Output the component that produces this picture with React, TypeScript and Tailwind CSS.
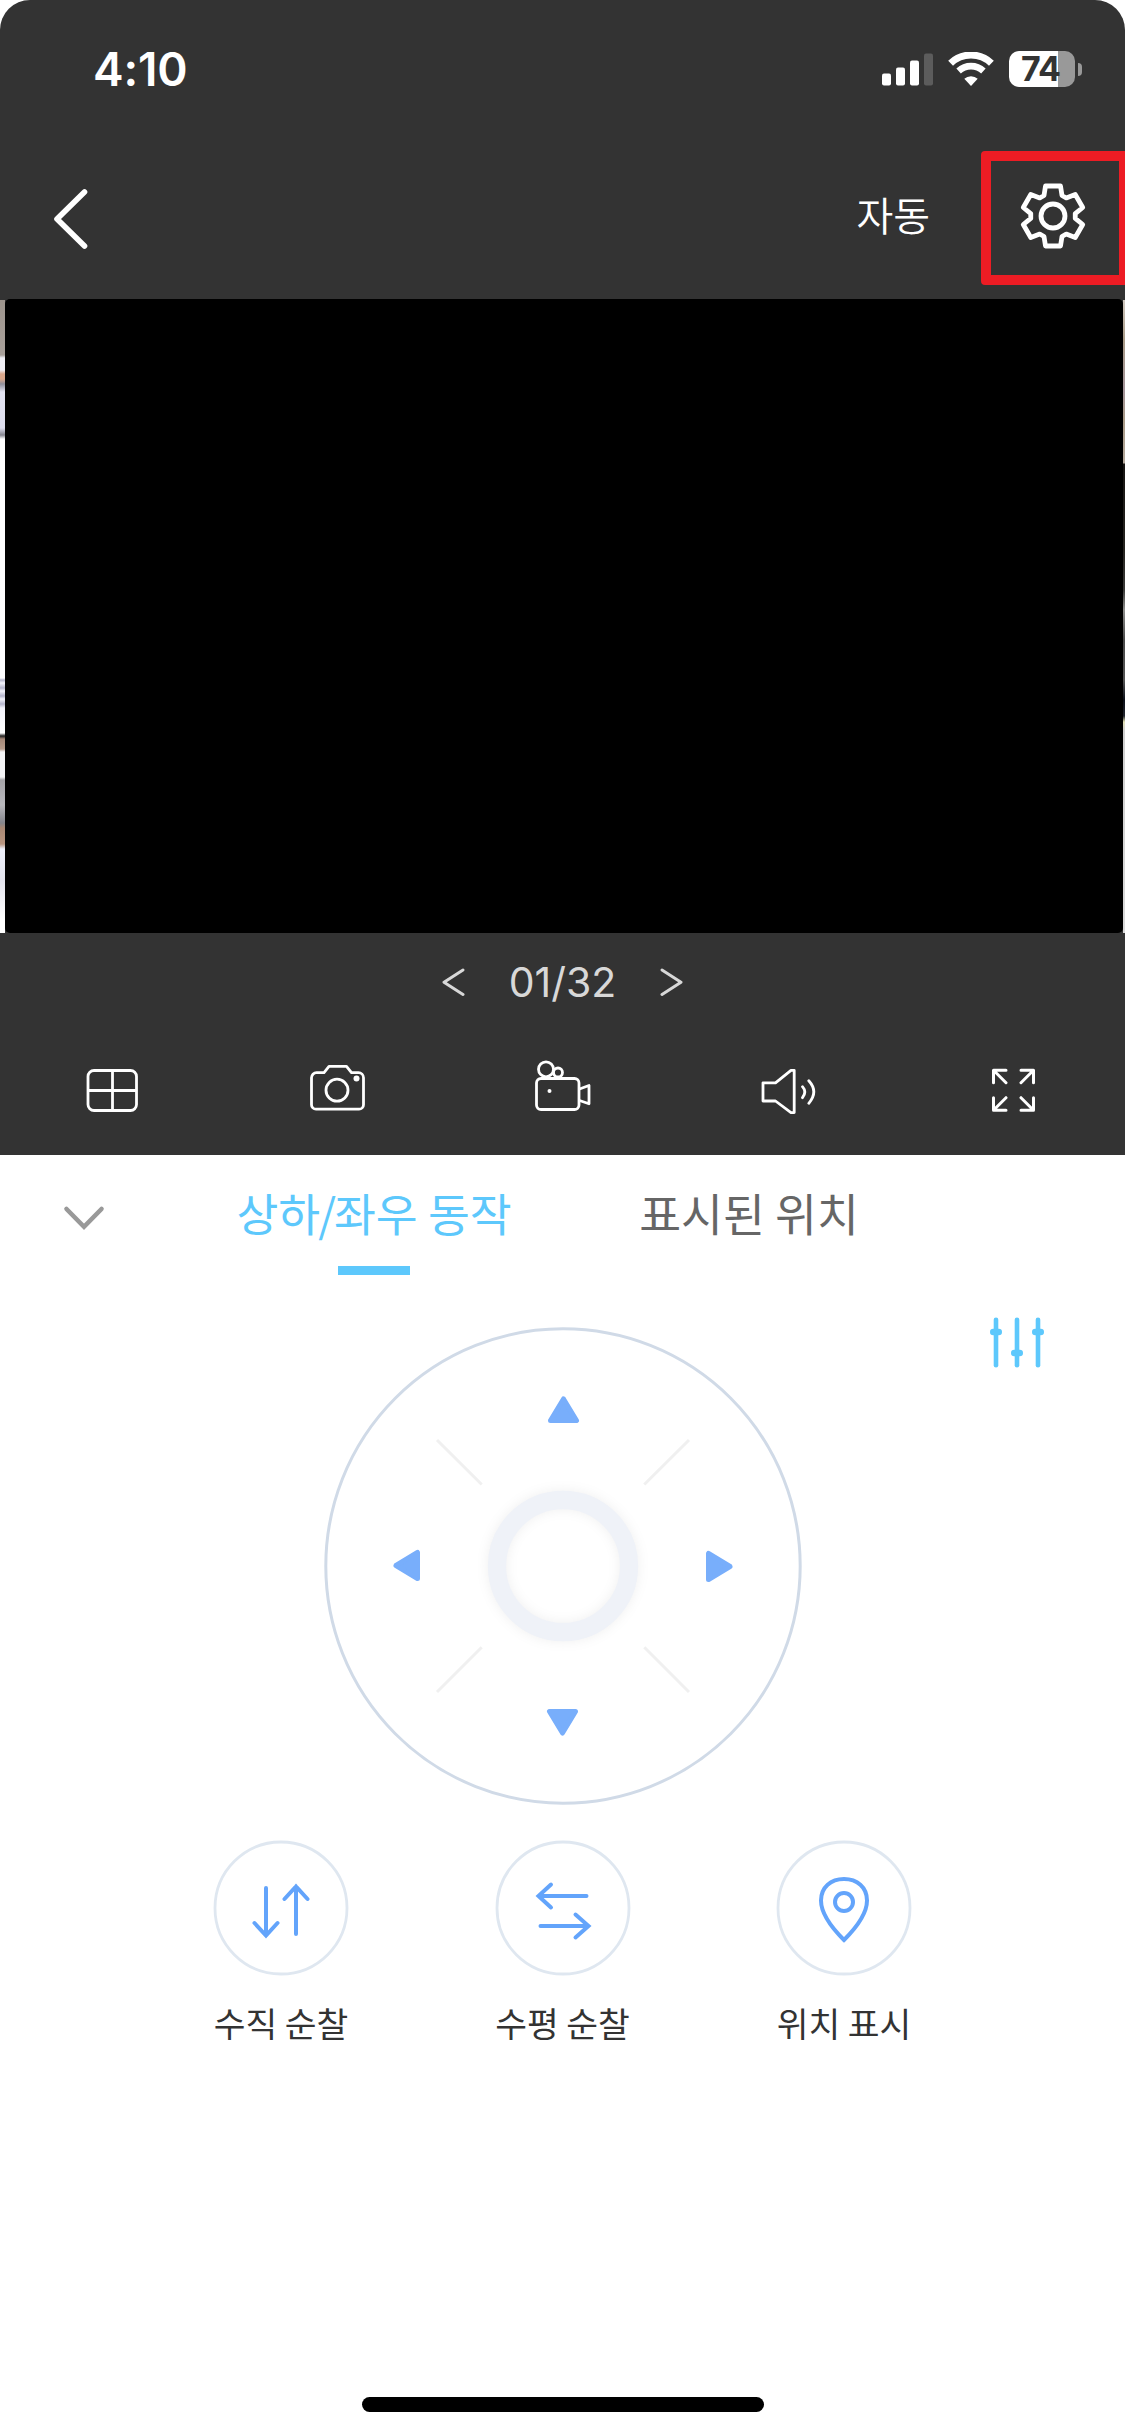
import type { ReactNode } from "react";

const KR = "font-['Noto_Sans_CJK_KR',sans-serif]";

function StatusBar() {
  return (
    <div className="flex h-[138px] items-start justify-between pl-[93px] pr-[43px]">
      <span className="mt-[41px] font-['Inter',sans-serif] text-[46px] leading-[56px] font-semibold tracking-[-0.2px] text-white">
        4:10
      </span>
      <div className="mt-[51px] flex h-9 items-center">
        <svg width="51" height="34" viewBox="0 0 51 34" fill="#fff">
          <rect x="0" y="21.5" width="9" height="12" rx="2" />
          <rect x="14" y="15.5" width="9" height="18" rx="2" />
          <rect x="28" y="8.500" width="9" height="25" rx="2" />
          <rect x="42" y="1.500" width="9" height="32" rx="2" fill="#5c5c5c" />
        </svg>
        <svg className="ml-[15px]" width="46" height="34" viewBox="0 0 46 34" fill="none" stroke="#fff">
          <path d="M2.6 11.2a29.5 29.5 0 0 1 40.8 0" strokeWidth="7" />
          <path d="M10.6 19a18.2 18.2 0 0 1 24.8 0" strokeWidth="6.6" />
          <path d="M23 34l-6.7-7.2a10 10 0 0 1 13.4 0z" fill="#fff" stroke="none" />
        </svg>
        <div className="ml-[15px] flex h-9 w-[66px] items-center justify-center rounded-[10px] bg-[linear-gradient(to_right,#fff_49px,#999_49px)] pr-[3px] font-['Inter',sans-serif] text-[34px] leading-9 font-bold tracking-[-0.8px] text-[#333]">
          74
        </div>
        <div className="ml-[3px] h-[13px] w-1 rounded-r-full bg-[#999]" />
      </div>
    </div>
  );
}

const TOOTH_ANGLES = [0, 60, 120, 180, 240, 300];

// One tooth of the gear, repeated around the centre
function gearPath() {
  const tooth = [
    [-9, -20.5],
    [-7.5, -30],
    [7.5, -30],
    [9, -20.5],
  ];
  const points = TOOTH_ANGLES.flatMap((deg) => {
    const a = (deg * Math.PI) / 180;
    return tooth.map(([x, y]) => `${(x * Math.cos(a) - y * Math.sin(a)).toFixed(2)} ${(x * Math.sin(a) + y * Math.cos(a)).toFixed(2)}`);
  });
  return `M${points.join("L")}Z`;
}

function NavBar() {
  return (
    <div className="flex h-[161px] items-center">
      <button className="ml-[52px]">
        <svg width="38" height="64" viewBox="0 0 38 64" fill="none" stroke="#fff" strokeWidth="5.6" strokeLinecap="round" strokeLinejoin="round">
          <path d="M32.5 5L5 32l27.5 27" />
        </svg>
      </button>
      <span className={`${KR} mr-[51px] mb-2.5 ml-auto text-[40px] leading-[56px] font-[350] text-white`}>자동</span>
      <button className="mb-px flex h-[134px] w-36 items-center justify-center rounded-l-[4px] border-[10px] border-r-[6px] border-[#ed1c24] pr-1 pb-1">
        <svg width="68" height="68" viewBox="-34 -34 68 68" fill="none" stroke="#fff" strokeWidth="4.8" strokeLinejoin="round">
          <path d={gearPath()} />
          <circle r="12" />
        </svg>
      </button>
    </div>
  );
}

// The neighbouring channels peek out on both sides of the current one
function VideoPager() {
  return (
    <div className="flex h-[634px] bg-[#333]">
      <div className="mt-px w-[5px] bg-[linear-gradient(to_bottom,#9d948d_0,#a8a09a_55px,#f0f0f6_58px,#f0eff5_70px,#dba88c_74px,#dba88c_79px,#8f8f9c_84px,#e4e4f2_92px,#dedeee_128px,#85858f_135px,#fff_139px,#fdfdff_378px,#b5b5cc_380px,#f4f4fc_383px,#b5b5cc_388px,#f4f4fc_391px,#b5b5cc_396px,#f4f4fc_399px,#b5b5cc_404px,#f4f4fc_408px,#fff_433px,#222_436px,#a58878_439px,#b79c8c_449px,#f4f4f6_452px,#f4f4f6_477px,#a5a4a8_480px,#b9b8bd_505px,#85858b_523px,#a98874_528px,#b89580_544px,#eef0fb_549px,#e4e4ee_580px,#fff_620px)]" />
      <div className="flex-1 rounded-[5px] bg-black" />
      <div className="mt-px w-0.5 bg-[linear-gradient(to_bottom,#cfc8c0_0,#a89a86_40px,#a3949a_90px,#a89a86_120px,#b3a89c_163px,#161412_164px,#25231f_250px,#3a3a38_290px,#8d8d8b_310px,#4a4a4a_340px,#555_380px,#0b0f18_400px,#20242c_416px,#e0dfb5_422px,#cfcfcf_430px,#d9d9d9_634px)]" />
    </div>
  );
}

function Pager() {
  return (
    <div className="flex h-[106px] items-center justify-center pb-2">
      <svg width="24" height="30" viewBox="0 0 24 30" fill="none" stroke="#d8d8d8" strokeWidth="3" strokeLinecap="round" strokeLinejoin="round">
        <path d="M22 3L3 15.2l19 12.3" />
      </svg>
      <span className="w-[195px] text-center font-['Inter',sans-serif] text-[41px] leading-[50px] font-normal text-[#d8d8d8]">
        01/32
      </span>
      <svg width="24" height="30" viewBox="0 0 24 30" fill="none" stroke="#d8d8d8" strokeWidth="3" strokeLinecap="round" strokeLinejoin="round">
        <path d="M2 3l19 12.2L2 27.5" />
      </svg>
    </div>
  );
}

function ToolIcon({ children }: { children: ReactNode }) {
  return (
    <button className="flex justify-center">
      <svg width="64" height="64" viewBox="0 0 64 64" fill="none" stroke="#fff" strokeWidth="2.8" strokeLinejoin="round">
        {children}
      </svg>
    </button>
  );
}

function Toolbar() {
  return (
    <div className="grid h-[116px] grid-cols-5 pt-5">
      <ToolIcon>
        <rect x="7" y="11.5" width="48.5" height="40" rx="6" />
        <path d="M31.5 11.5v40M7 31.5h48.5" />
      </ToolIcon>
      <ToolIcon>
        <g transform="translate(-.5 0)">
          <path d="M11 13.7h7.5l5-6.3h17.5l5 6.3h7a5 5 0 0 1 5 5v27a4.5 4.5 0 0 1-4.5 4.5H10.5A4.5 4.5 0 0 1 6 45.7v-27a5 5 0 0 1 5-5z" />
          <circle cx="31.5" cy="31.2" r="11" />
          <circle cx="51" cy="19.5" r="3" fill="#fff" stroke="none" />
        </g>
      </ToolIcon>
      <ToolIcon>
        <circle cx="15" cy="10.3" r="7.5" />
        <circle cx="27" cy="13.5" r="4.5" />
        <rect x="5.5" y="19.5" width="42.5" height="31" rx="4.5" />
        <circle cx="18.5" cy="32" r="2" fill="#fff" stroke="none" />
        <path d="M48.5 30l9.5-3.5v18.3l-9.5-3.3" />
      </ToolIcon>
      <ToolIcon>
        <path d="M7 23.8h12.5L35 11.3h3.2v42.3H35L19.5 42H7z" />
        <path d="M46.5 27.7q4.6 5.3 0 11M52.8 21.7q10 11 0 22.6" strokeLinecap="round" />
      </ToolIcon>
      <ToolIcon>
        <path
          d="M24.5 12H12v12.5M12.5 12.5l12 12M39.5 12H52v12.5M51.5 12.5l-12 12M12 39.5V52h12.5M12.5 51.5l12-12M39.5 52H52V39.5M51.5 51.5l-12-12"
          strokeLinecap="round"
          transform="translate(.5 -.8)"
          strokeWidth="3"
        />
      </ToolIcon>
    </div>
  );
}

function Tabs() {
  return (
    <div className="flex h-[120px] items-start">
      <svg className="mt-[49px] ml-[62px]" width="44" height="30" viewBox="0 0 44 30" fill="none" stroke="#999" strokeWidth="4.6" strokeLinecap="round">
        <path d="M4.5 5L22 22.8 39.5 5" />
      </svg>
      <button className="ml-[108px] flex h-full w-80 flex-col items-center justify-between">
        <span className={`${KR} mt-6 text-[45.5px] leading-[66px] whitespace-nowrap text-[#5dc8fc]`}>
          상하<span className="-mx-0.5">/</span>좌우 동작
        </span>
        <span className="h-[9px] w-[72px] bg-[#5dc8fc]" />
      </button>
      <button className="ml-[55px] flex w-80 justify-center">
        <span className={`${KR} mt-6 text-[45.5px] leading-[66px] whitespace-nowrap text-[#666]`}>표시된 위치</span>
      </button>
    </div>
  );
}

function SlidersButton() {
  return (
    <svg className="absolute top-[40px] right-[79px]" width="58" height="54" viewBox="0 0 58 54" fill="#5dc8fc">
      {[
        [8, 17],
        [29, 38],
        [50, 17],
      ].map(([x, knob]) => (
        <g key={x}>
          <rect x={x - 2.3} y="2.5" width="4.6" height="50" rx="2.3" />
          <rect x={x - 6} y={knob - 3.2} width="12" height="6.4" rx="3.2" />
        </g>
      ))}
    </svg>
  );
}

function DirectionPad() {
  return (
    <svg width="480" height="480" viewBox="-240 -240 480 480" fill="none">
      <defs>
        <filter id="soft" x="-50%" y="-50%" width="200%" height="200%">
          <feGaussianBlur stdDeviation="6" />
        </filter>
      </defs>
      <circle r="237.2" stroke="#d0dae7" strokeWidth="3" />
      <path d="M-126-126l44.7 44.5M126-126L81.3-81.5M-81.3 81.3L-126 126M81.3 81.3L126 126" stroke="#f0f0f0" strokeWidth="3" />
      <circle r="66" stroke="#000" strokeOpacity=".06" strokeWidth="19" filter="url(#soft)" />
      <circle r="66" stroke="#eff2f8" strokeWidth="18.3" />
      <g fill="#78aefb" stroke="#78aefb" strokeWidth="5" strokeLinejoin="round">
        <path d="M.5-167l13 21.5h-26z" />
        <path d="M-.5 167l-13-21.5h26z" />
        <path d="M-167-.5l21.5-13v26z" />
        <path d="M167 .5l-21.5-13v26z" />
      </g>
    </svg>
  );
}

function PatrolButton({ label, children }: { label: string; children: ReactNode }) {
  return (
    <button className="flex w-[281.5px] flex-col items-center">
      <svg width="136" height="136" viewBox="-68 -68 136 136" fill="none" stroke="#63a4fb" strokeWidth="4" strokeLinecap="round">
        <circle r="66" stroke="#dfe7f0" strokeWidth="2.8" />
        {children}
      </svg>
      <span className={`${KR} mt-[21px] text-[34.5px] leading-[50px] text-[#333]`}>{label}</span>
    </button>
  );
}

export default function App() {
  return (
    <div className="flex h-[2436px] w-[1125px] flex-col overflow-hidden bg-white">
      <header className="rounded-t-[30px] bg-[#333]">
        <StatusBar />
        <NavBar />
      </header>
      <VideoPager />
      <section className="bg-[#333]">
        <Pager />
        <Toolbar />
      </section>
      <Tabs />
      <main className="relative flex flex-col items-center pt-[51px]">
        <SlidersButton />
        <DirectionPad />
        <div className="mt-[34px] flex justify-center">
          <PatrolButton label="수직 순찰">
            <path d="M-15-20v47.5M-26.5 15L-15 27.5-3.5 15M15 26v-47.5M3.5-9L15-21.5 26.5-9" />
          </PatrolButton>
          <PatrolButton label="수평 순찰">
            <path d="M23.5-12H-24M-12-23.5L-24.5-12-12-.5M-22.5 18H25M12.5 6.5L25.5 18 12.5 29.5" />
          </PatrolButton>
          <PatrolButton label="위치 표시">
            <path d="M0 32C-13 19-23 6-23-7.5-23-21-13-29 0-29S23-21 23-7.5C23 6 13 19 0 32z" />
            <circle cy="-6" r="9" />
          </PatrolButton>
        </div>
      </main>
      <div className="mt-auto mb-6 h-[15px] w-[402px] self-center rounded-full bg-black" />
    </div>
  );
}
